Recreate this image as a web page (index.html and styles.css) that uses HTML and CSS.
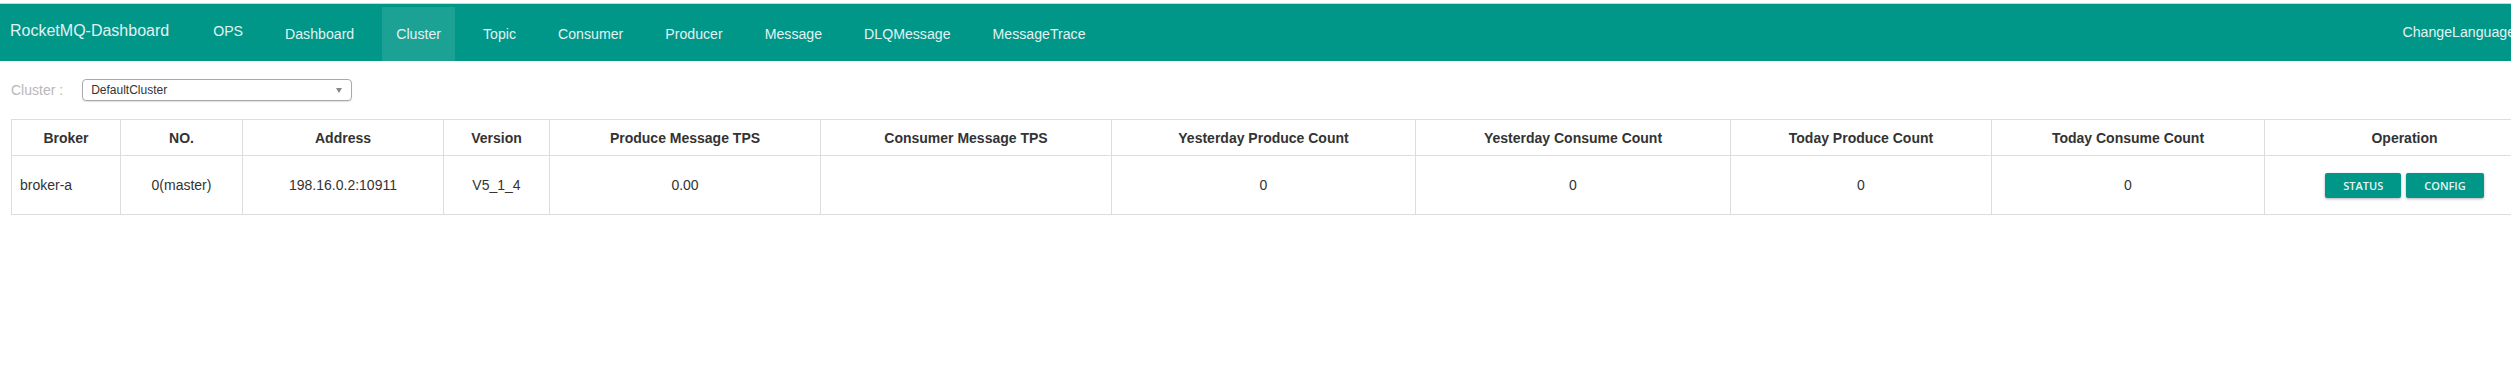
FILE: index.html
```html
<!DOCTYPE html>
<html lang="en">
<head>
<meta charset="utf-8">
<title>RocketMQ-Dashboard</title>
<link rel="stylesheet" href="styles.css">
</head>
<body>
<div class="page">
  <nav class="navbar">
    <a class="brand">RocketMQ-Dashboard</a>
    <a class="nav-link ops">OPS</a>
    <a class="nav-link">Dashboard</a>
    <a class="nav-link active">Cluster</a>
    <a class="nav-link">Topic</a>
    <a class="nav-link">Consumer</a>
    <a class="nav-link">Producer</a>
    <a class="nav-link">Message</a>
    <a class="nav-link">DLQMessage</a>
    <a class="nav-link">MessageTrace</a>
    <a class="nav-link lang">ChangeLanguage</a>
  </nav>

  <div class="filter">
    <span class="filter-label">Cluster :</span>
    <div class="select">
      <span class="select-value">DefaultCluster</span>
      <span class="select-arrow"></span>
    </div>
  </div>

  <table class="grid">
    <colgroup>
      <col class="c-broker"><col class="c-no"><col class="c-addr"><col class="c-ver"><col class="c-ptps"><col class="c-ctps"><col class="c-ypc"><col class="c-ycc"><col class="c-tpc"><col class="c-tcc"><col class="c-op">
    </colgroup>
    <thead>
      <tr>
        <th>Broker</th>
        <th>NO.</th>
        <th>Address</th>
        <th>Version</th>
        <th>Produce Message TPS</th>
        <th>Consumer Message TPS</th>
        <th>Yesterday Produce Count</th>
        <th>Yesterday Consume Count</th>
        <th>Today Produce Count</th>
        <th>Today Consume Count</th>
        <th>Operation</th>
      </tr>
    </thead>
    <tbody>
      <tr>
        <td class="left">broker-a</td>
        <td>0(master)</td>
        <td>198.16.0.2:10911</td>
        <td>V5_1_4</td>
        <td>0.00</td>
        <td></td>
        <td>0</td>
        <td>0</td>
        <td>0</td>
        <td>0</td>
        <td>
          <div class="ops-btns">
            <button class="btn">STATUS</button>
            <button class="btn">CONFIG</button>
          </div>
        </td>
      </tr>
    </tbody>
  </table>
</div>
</body>
</html>
```

FILE: styles.css
```css
html, body {
  margin: 0;
  overflow: hidden;
  background: #fff;
}
body {
  padding-top: 3px;
  font-family: "Liberation Sans", Arial, sans-serif;
  font-size: 14px;
  color: #333;
}
.page {
  width: 2555px;
}

/* navbar */
.navbar {
  display: flex;
  align-items: flex-start;
  gap: 14px;
  height: 57px;
  background: #009688;
  border-top: 1px solid #d3d3d3;
  padding-right: 26px;
}
.brand {
  padding: 17px 16px 0 10px;
  font-size: 16px;
  line-height: 20px;
  color: #e0f2f1;
  white-space: nowrap;
}
.nav-link {
  box-sizing: border-box;
  margin-top: 3px;
  height: 54px;
  padding: 17px 14px 0;
  font-size: 14.15px;
  line-height: 20px;
  color: #e0f2f1;
  white-space: nowrap;
}
.nav-link.ops {
  padding-top: 14px;
}
.nav-link.active {
  background: rgba(255, 255, 255, 0.11);
}
.nav-link.lang {
  margin-left: auto;
  padding-top: 15px;
}

/* filter */
.filter {
  display: flex;
  align-items: center;
  margin: 18px 0 18px 11px;
}
.filter-label {
  color: #b8b8b8;
  line-height: 20px;
  margin-right: 19px;
}
.select {
  box-sizing: border-box;
  width: 270px;
  height: 22px;
  border: 1px solid #a9a9a9;
  border-radius: 4px;
  box-shadow: 0 1px 1px rgba(0, 0, 0, 0.12);
  display: flex;
  align-items: center;
  justify-content: space-between;
  padding: 0 9px 0 8px;
}
.select-value {
  font-size: 12px;
  color: #333;
}
.select-arrow {
  width: 0;
  height: 0;
  border-left: 3px solid transparent;
  border-right: 3px solid transparent;
  border-top: 5px solid #888;
}

/* table */
.grid {
  margin-left: 11px;
  width: 2533px;
  table-layout: fixed;
  border-collapse: collapse;
}
.c-broker { width: 109px; }
.c-no { width: 122px; }
.c-addr { width: 201px; }
.c-ver { width: 106px; }
.c-ptps { width: 271px; }
.c-ctps { width: 291px; }
.c-ypc { width: 304px; }
.c-ycc { width: 315px; }
.c-tpc { width: 261px; }
.c-tcc { width: 273px; }
.c-op { width: 280px; }

.grid th,
.grid td {
  border: 1px solid #dddddd;
  padding: 0 8px;
  text-align: center;
  vertical-align: middle;
  line-height: 20px;
  color: #333;
}
.grid th {
  height: 35px;
  font-weight: bold;
}
.grid td {
  height: 58px;
}
.grid td.left {
  text-align: left;
}

.ops-btns {
  display: flex;
  justify-content: center;
  gap: 5px;
}
.btn {
  height: 25px;
  padding: 0 18px;
  border: none;
  border-radius: 2px;
  background: #009688;
  color: #e8f5f3;
  font-family: "Open Sans", "Liberation Sans", sans-serif;
  font-size: 11px;
  font-weight: 600;
  box-shadow: 0 1px 3px rgba(0, 0, 0, 0.3);
}
```
